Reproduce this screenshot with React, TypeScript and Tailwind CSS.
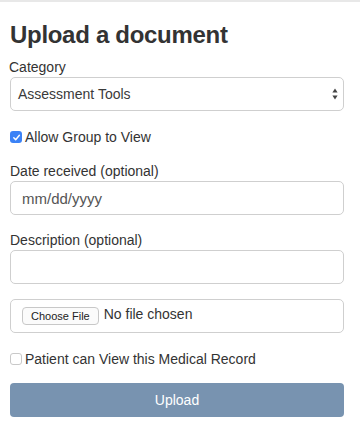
import React from "react";

const Check = ({ checked }: { checked: boolean }) =>
  checked ? (
    <span className="flex h-[12px] w-[12px] shrink-0 items-center justify-center rounded-[3px] bg-[#3b82f6]">
      <svg width="9" height="9" viewBox="0 0 10 10" fill="none">
        <path
          d="M2 5.3 L4.1 7.4 L8.2 2.6"
          stroke="white"
          strokeWidth="1.6"
          strokeLinecap="round"
          strokeLinejoin="round"
        />
      </svg>
    </span>
  ) : (
    <span className="h-[12px] w-[12px] shrink-0 rounded-[3px] border border-[#c9c9c9] bg-white" />
  );

const Label = ({ text, className = "" }: { text: string; className?: string }) => (
  <label className={`block text-[14px] leading-[20px] text-[#333] ${className}`}>
    {text}
  </label>
);

export default function App() {
  return (
    <div className="min-h-[426px] bg-white font-['Liberation_Sans',Arial,sans-serif] text-[#333]">
      {/* barra superior */}
      <div className="h-[2px] bg-[#e8e8e8]" />

      <div className="pl-[10px] pr-[16px]">
        <h3 className="mt-[20px] text-[24px] font-bold leading-[26px] tracking-[-0.3px] text-[#333]">
          Upload a document
        </h3>

        <Label text="Category" className="mt-[9px] -ml-px" />
        <div className="flex h-[34px] items-center justify-between rounded-[5px] border border-[#cfcfcf] bg-white pl-[7px] pr-[4px]">
          <span className="text-[14px] text-[#3a3a3a]">Assessment Tools</span>
          <svg width="6" height="12" viewBox="0 0 6 12" className="mr-[1px]">
            <path d="M3 0.5 L5.6 4.6 L0.4 4.6 Z" fill="#444" />
            <path d="M3 11.5 L5.6 7.4 L0.4 7.4 Z" fill="#444" />
          </svg>
        </div>

        <div className="mt-[16px] flex h-[20px] items-center gap-[3px]">
          <Check checked />
          <span className="text-[14px] leading-[20px]">Allow Group to View</span>
        </div>

        <Label text="Date received (optional)" className="mt-[14px]" />
        <input
          type="text"
          placeholder="mm/dd/yyyy"
          className="block h-[34px] w-full rounded-[5px] border border-[#cfcfcf] bg-white pl-[11px] text-[15px] text-[#555] outline-none placeholder:text-[#555]"
        />

        <Label text="Description (optional)" className="mt-[15px]" />
        <input
          type="text"
          className="block h-[34px] w-full rounded-[5px] border border-[#cfcfcf] bg-white px-[11px] text-[14px] outline-none"
        />

        <div className="mt-[15px] flex h-[34px] items-center gap-[5px] rounded-[5px] border border-[#cfcfcf] bg-white pl-[11px]">
          <button className="flex h-[18px] items-center rounded-[4px] border border-[#c8c8c8] bg-[#fbfbfb] px-[8px] text-[11px] leading-none text-[#222]">
            Choose File
          </button>
          <span className="mb-[4px] text-[14px] leading-[20px] text-[#333]">No file chosen</span>
        </div>

        <div className="mt-[16px] flex h-[20px] items-center gap-[3px]">
          <Check checked={false} />
          <span className="text-[14px] leading-[20px]">Patient can View this Medical Record</span>
        </div>

        <button className="mt-[14px] flex h-[34px] w-full items-center justify-center rounded-[4px] bg-[#7893b0] text-[14px] text-white">
          Upload
        </button>
      </div>
    </div>
  );
}
